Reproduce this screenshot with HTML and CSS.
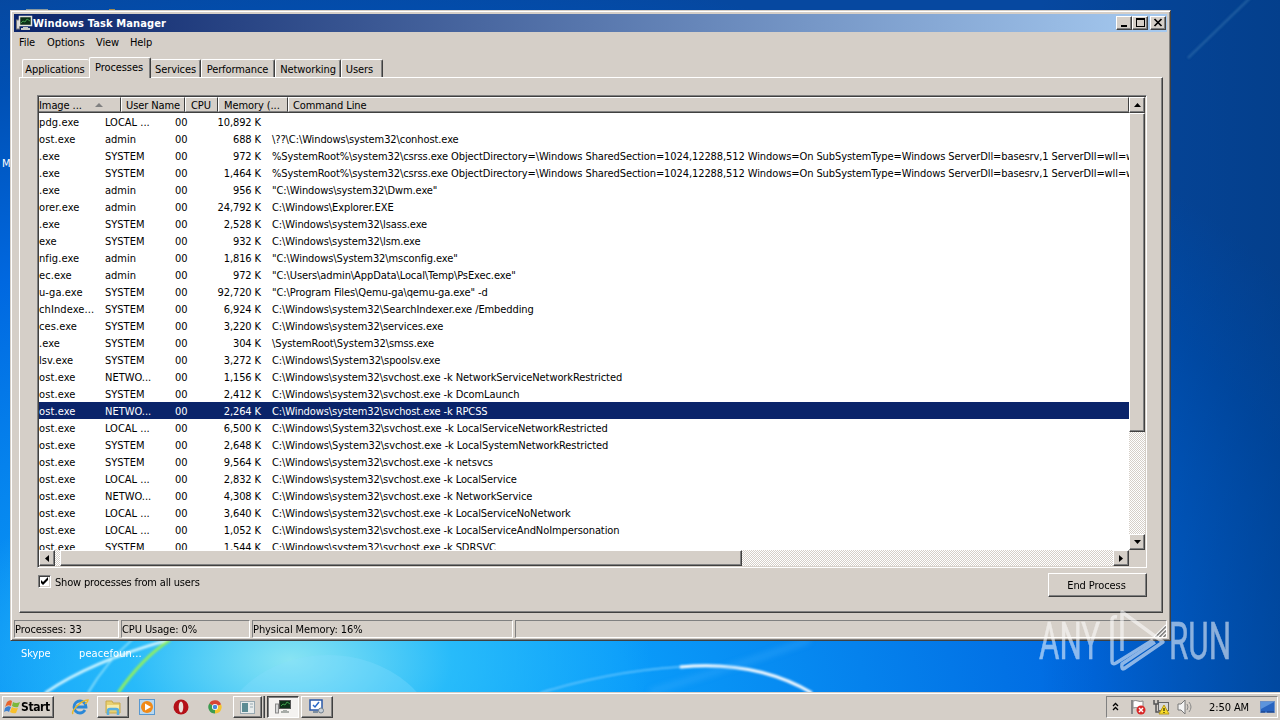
FILE: index.html
```html
<!DOCTYPE html>
<html lang="en">
<head>
  <meta charset="UTF-8">
  <meta name="viewport" content="width=device-width, initial-scale=1.0">
  <title>Windows Task Manager</title>
  <link rel="stylesheet" href="styles.css">
</head>
<body>

  <div class="desktop">
    <svg class="wallpaper" viewBox="0 0 1280 692" width="1280" height="692">
      <defs>
        <filter id="soft"><feGaussianBlur stdDeviation="0.8"/></filter>
        <filter id="softer"><feGaussianBlur stdDeviation="3"/></filter>
      </defs>
      <ellipse cx="328" cy="750" rx="112" ry="95" fill="#8df" opacity=".3"/>
      <g fill="none" filter="url(#soft)">
        <path d="M45 693 Q90 662 168 640" stroke="#d8f8ff" stroke-width="2.5"/>
        <path d="M88 693 Q106 662 134 638" stroke="#9ae6fb" stroke-width="1.5"/>
        <path d="M118 693 Q142 658 170 640" stroke="#90f060" stroke-width="3"/>
        <path d="M540 693 Q620 668 700 666" stroke="#6cc8ff" stroke-width="1.5"/>
        <path d="M680 667 Q756 660 812 693" stroke="#fff" stroke-width="3"/>
        <path d="M1188 58 L1250 -2" stroke="#3a78b0" stroke-width="2" opacity=".6"/>
      </g>
      <path d="M650 692 Q740 665 810 640" stroke="#4ab4ff" stroke-width="5" opacity=".4" fill="none" filter="url(#softer)"/>
      <rect x="26" y="9" width="22" height="1" fill="#8a9aa0"/>
      <rect x="109" y="9" width="6" height="2" fill="#a08a50"/>
    </svg>
    <span class="shortcut label-m">M</span>
    <span class="shortcut label-skype">Skype</span>
    <span class="shortcut label-peace">peacefoun...</span>

    <div class="window">
      <div class="titlebar">
        <svg width="17" height="16" viewBox="0 0 17 16">
          <rect x="0.5" y="5" width="3" height="9" fill="#d8d8d8" stroke="#777"/>
          <rect x="3.5" y="1.5" width="12" height="9" fill="#0c3018" stroke="#e4e4dc" stroke-width="1.5"/>
          <path d="M5 8l2-2 2 1 2-3 3 2" stroke="#3c9a4a" fill="none"/>
          <path d="M7 12h5v1h2v2H5v-2h2z" fill="#c8ccc8"/>
        </svg>
        <span class="title">Windows Task Manager</span>
        <div class="caption-btn"><svg width="14" height="11"><rect x="4" y="8" width="6" height="2"/></svg></div>
        <div class="caption-btn"><svg width="14" height="11"><path d="M3 1h9v9H3zM4 3v6h7V3z" fill-rule="evenodd"/></svg></div>
        <div class="caption-btn close"><svg width="14" height="11"><path d="M3.5 2l7 7M10.5 2l-7 7" stroke="#000" stroke-width="1.7"/></svg></div>
      </div>

      <div class="menu">
        <span class="m-file">File</span><span class="m-options">Options</span><span class="m-view">View</span><span>Help</span>
      </div>

      <div class="tabs">
        <div class="tab t-app">Applications</div>
        <div class="tab t-proc active">Processes</div>
        <div class="tab t-serv">Services</div>
        <div class="tab t-perf">Performance</div>
        <div class="tab t-net">Networking</div>
        <div class="tab t-users">Users</div>
      </div>

      <div class="page">
        <div class="list">
          <div class="view">
            <div class="header">
              <div class="h-image">Image ... <i></i></div>
              <div class="h-user">User Name</div>
              <div class="h-cpu">CPU</div>
              <div class="h-mem">Memory (...</div>
              <div class="h-cmd">Command Line</div>
            </div>
            <div class="rows" id="rows"></div>
          </div>
          <div class="vscroll">
            <div class="arrow"><svg width="7" height="4"><path d="M3.5 0L7 4H0z"/></svg></div>
            <div class="vthumb"></div>
            <div class="arrow down"><svg width="7" height="4"><path d="M0 0h7L3.5 4z"/></svg></div>
          </div>
          <div class="hscroll">
            <div class="arrow"><svg width="4" height="7"><path d="M0 3.5L4 0v7z"/></svg></div>
            <div class="hthumb"></div>
            <div class="arrow right"><svg width="4" height="7"><path d="M0 0l4 3.5L0 7z"/></svg></div>
          </div>
          <div class="corner"></div>
        </div>
        <div class="actions">
          <div class="check"><svg width="9" height="9"><path d="M1 3v3l2 2 5-5V0L3 5z"/></svg></div>
          <span class="check-label">Show processes from all users</span>
          <div class="end-btn">End Process</div>
        </div>
      </div>

      <div class="status">
        <div class="s-proc">Processes: 33</div>
        <div class="s-cpu">CPU Usage: 0%</div>
        <div class="s-mem">Physical Memory: 16%</div>
        <div class="s-rest">
          <svg width="13" height="13"><path d="M1 13L13 1M5 13l8-8M9 13l4-4" stroke="#fff" stroke-width="1.2"/><path d="M2.5 13L13 2.5M6.5 13L13 6.5M10.5 13l2.5-2.5" stroke="#808080" stroke-width="1.5"/></svg>
        </div>
      </div>
    </div>

    <svg class="watermark" width="196" height="66" viewBox="0 0 196 66">
      <g fill="#fff" stroke="#fff" stroke-width=".5" font-family="Roboto, sans-serif" font-size="52">
        <text x="2" y="50" textLength="61" lengthAdjust="spacingAndGlyphs">ANY</text>
        <text x="132" y="50" textLength="62" lengthAdjust="spacingAndGlyphs">RUN</text>
      </g>
      <g fill="none" stroke="#fff" stroke-width="3.5" stroke-linejoin="round">
        <path d="M85 42V3L126 33 88 59Q84 62 85 55L118 33"/>
        <path d="M80 8Q75 7 75 11V52Q75 56 79 54L116 31"/>
      </g>
    </svg>

    <div class="taskbar">
      <div class="start">
        <svg width="17" height="16" viewBox="0 0 17 16">
          <path d="M3 3Q6 0 8 2L7 7Q4 5 1 8z" fill="#e8642c"/>
          <path d="M9 3Q12 5 16 3L14 8Q11 9 8 7z" fill="#7cb83c"/>
          <path d="M1 9Q4 6 7 8L5 13Q3 11 0 13z" fill="#3c80d0"/>
          <path d="M8 8Q11 10 14 9L12 14Q9 15 6 13z" fill="#f8c02c"/>
        </svg>
        <b>Start</b>
      </div>
      <div class="slot s-ie">
        <svg width="18" height="18" viewBox="0 0 18 18">
          <path d="M14 12Q12 15 9 15A6 6 0 1 1 15 9H5" fill="none" stroke="#2a88d8" stroke-width="2.8"/>
          <path d="M2 16Q0 14 6 8T17 2Q17 4 14 6" fill="none" stroke="#e8b828" stroke-width="1.5"/>
        </svg>
      </div>
      <div class="slot raised s-folder">
        <svg width="18" height="17" viewBox="0 0 18 17">
          <path d="M2 2h6l1 2h7v10H2z" fill="#e8d070" stroke="#c8a848"/>
          <path d="M3 6h12v5H3z" fill="#f8eca8"/>
          <path d="M4 16v-4q0-2 2-2h6q2 0 2 2v4" fill="none" stroke="#58b0e0" stroke-width="2.5"/>
        </svg>
      </div>
      <div class="slot s-media">
        <svg width="17" height="17" viewBox="0 0 17 17">
          <rect x=".5" y=".5" width="15" height="15" fill="#b8d8f0" stroke="#5898d0"/>
          <circle cx="8" cy="8" r="6" fill="#f08a18"/><path d="M6 4.5l6 3.5-6 3.5z" fill="#fff"/>
        </svg>
      </div>
      <div class="slot s-opera">
        <svg width="16" height="16" viewBox="0 0 16 16"><circle cx="8" cy="8" r="7.5" fill="#b41018"/><ellipse cx="8" cy="8" rx="2.3" ry="5.5" fill="#e8e0dc"/></svg>
      </div>
      <div class="slot s-chrome">
        <svg width="14" height="14" viewBox="0 0 16 16">
          <path d="M8 8L1.5 4A7.5 7.5 0 0 1 15 5z" fill="#d84434"/>
          <path d="M8 8L15 5A7.5 7.5 0 0 1 8 15.5z" fill="#f4c430"/>
          <path d="M8 8v7.5A7.5 7.5 0 0 1 1.5 4z" fill="#3c9c50"/>
          <circle cx="8" cy="8" r="3.5" fill="#fff"/><circle cx="8" cy="8" r="2.6" fill="#4a88dc"/>
        </svg>
      </div>
      <div class="slot raised s-window">
        <svg width="15" height="13" viewBox="0 0 15 13"><rect x=".5" y=".5" width="14" height="12" fill="#e8ecec" stroke="#98a8b0"/><rect x="2" y="2" width="6" height="9" fill="#5c8c94"/><path d="M10 3h3M10 6h3" stroke="#98a8b0"/></svg>
      </div>
      <div class="slot-edge"></div>
      <div class="slot pressed s-taskmgr">
        <svg width="17" height="16" viewBox="0 0 17 16">
          <rect x="0.5" y="5" width="3" height="9" fill="#d8d8d8" stroke="#888"/>
          <rect x="4.5" y="1.5" width="11" height="8" fill="#0c3018" stroke="#555"/>
          <path d="M6 7l2-2 2 1 2-3 3 2" stroke="#3c9a4a" fill="none"/>
          <path d="M8 11h4v1h2v2H6v-2h2z" fill="#a8aca8"/>
        </svg>
      </div>
      <div class="slot raised s-config">
        <svg width="16" height="16" viewBox="0 0 16 16">
          <rect x="1" y="1" width="12" height="10" fill="#fff" stroke="#2858a8" stroke-width="1.5"/>
          <path d="M4 6l2 2 4-5" stroke="#2868c8" fill="none" stroke-width="1.5"/>
          <path d="M4 13h5" stroke="#607890" stroke-width="1.5"/><circle cx="12" cy="11.5" r="2.5" fill="#c8d0d8" stroke="#708090"/>
        </svg>
      </div>

      <div class="tray">
        <svg class="chev" width="7" height="10" viewBox="0 0 7 10"><path d="M1 4L3.5 1.500l2.500 2.500M1 8l2.500-2.500L6 8" fill="none" stroke="#000" stroke-width="1.3"/></svg>
        <svg class="flag" width="17" height="16" viewBox="0 0 17 16">
          <path d="M2 1v14" stroke="#888" stroke-width="2"/><path d="M3 2q3-1 5 0t5 0v7q-3 1-5 0t-5 0z" fill="#fff" stroke="#888"/>
          <circle cx="11" cy="11" r="4.5" fill="#d82828"/><path d="M9 9l4 4M13 9l-4 4" stroke="#fff" stroke-width="1.5"/>
        </svg>
        <svg class="net" width="17" height="16" viewBox="0 0 17 16">
          <rect x="5.5" y="3.5" width="10" height="8" fill="#d8d8d8" stroke="#666"/>
          <path d="M1 1v4h4V1M3 5v8h5" fill="none" stroke="#555" stroke-width="1.5"/>
          <path d="M11 6l5 9H6z" fill="#f8dc28" stroke="#b89818"/><path d="M11 9v3M11 13v1" stroke="#000"/>
        </svg>
        <svg class="vol" width="17" height="16" viewBox="0 0 17 16">
          <path d="M1 5h3l4-4v14l-4-4H1z" fill="#f4f4f4" stroke="#777"/>
          <path d="M10 5q2 3 0 6M12 3q4 5 0 10" fill="none" stroke="#888"/>
        </svg>
        <span class="clock">2:50 AM</span>
        <svg class="desk" width="15" height="13" viewBox="0 0 15 13"><rect x=".5" y=".5" width="14" height="11" fill="#2864c0" stroke="#6a90c8"/><path d="M1 1h13L1 8z" fill="#5c94dc"/><path d="M1 11h4M7 11h7" stroke="#183878"/></svg>
      </div>
    </div>
  </div>

  <script>
    const sys = 'C:\\Windows\\system32\\';
    const csrss = '%SystemRoot%\\system32\\csrss.exe ObjectDirectory=\\Windows SharedSection=1024,12288,512 Windows=On SubSystemType=Windows ServerDll=basesrv,1 ServerDll=wll=w';
    // image, user, memory, command line
    const processes = [
      ['pdg.exe', 'LOCAL ...', '10,892', ''],
      ['ost.exe', 'admin', '688', '\\??\\' + sys + 'conhost.exe'],
      ['.exe', 'SYSTEM', '972', csrss],
      ['.exe', 'SYSTEM', '1,464', csrss],
      ['.exe', 'admin', '956', '"C:\\Windows\\system32\\Dwm.exe"'],
      ['orer.exe', 'admin', '24,792', 'C:\\Windows\\Explorer.EXE'],
      ['.exe', 'SYSTEM', '2,528', sys + 'lsass.exe'],
      ['exe', 'SYSTEM', '932', sys + 'lsm.exe'],
      ['nfig.exe', 'admin', '1,816', '"C:\\Windows\\System32\\msconfig.exe"'],
      ['ec.exe', 'admin', '972', '"C:\\Users\\admin\\AppData\\Local\\Temp\\PsExec.exe"'],
      ['u-ga.exe', 'SYSTEM', '92,720', '"C:\\Program Files\\Qemu-ga\\qemu-ga.exe" -d'],
      ['chIndexe...', 'SYSTEM', '6,924', sys + 'SearchIndexer.exe /Embedding'],
      ['ces.exe', 'SYSTEM', '3,220', sys + 'services.exe'],
      ['.exe', 'SYSTEM', '304', '\\SystemRoot\\System32\\smss.exe'],
      ['lsv.exe', 'SYSTEM', '3,272', 'C:\\Windows\\System32\\spoolsv.exe'],
      ['ost.exe', 'NETWO...', '1,156', sys + 'svchost.exe -k NetworkServiceNetworkRestricted'],
      ['ost.exe', 'SYSTEM', '2,412', sys + 'svchost.exe -k DcomLaunch'],
      ['ost.exe', 'NETWO...', '2,264', sys + 'svchost.exe -k RPCSS'],
      ['ost.exe', 'LOCAL ...', '6,500', 'C:\\Windows\\System32\\svchost.exe -k LocalServiceNetworkRestricted'],
      ['ost.exe', 'SYSTEM', '2,648', 'C:\\Windows\\System32\\svchost.exe -k LocalSystemNetworkRestricted'],
      ['ost.exe', 'SYSTEM', '9,564', sys + 'svchost.exe -k netsvcs'],
      ['ost.exe', 'LOCAL ...', '2,832', sys + 'svchost.exe -k LocalService'],
      ['ost.exe', 'NETWO...', '4,308', sys + 'svchost.exe -k NetworkService'],
      ['ost.exe', 'LOCAL ...', '3,640', sys + 'svchost.exe -k LocalServiceNoNetwork'],
      ['ost.exe', 'LOCAL ...', '1,052', sys + 'svchost.exe -k LocalServiceAndNoImpersonation'],
      ['ost.exe', 'SYSTEM', '1,544', sys + 'svchost.exe -k SDRSVC']
    ];
    const rows = document.getElementById('rows');

    processes.forEach((p, i) => {
      const row = document.createElement('div');
      row.className = i === 17 ? 'row selected' : 'row';
      [p[0], p[1], '00', p[2] + ' K', p[3]].forEach(text => {
        const cell = document.createElement('span');
        cell.textContent = text;
        row.appendChild(cell);
      });
      rows.appendChild(row);
    });
  </script>
</body>
</html>
```

FILE: styles.css
```css
* {
  margin: 0;
  padding: 0;
  box-sizing: border-box;
}

body {
  font-family: "DejaVu Sans Condensed", "DejaVu Sans", sans-serif;
  font-size: 11px;
  letter-spacing: -0.09px;
  color: #000;
  overflow: hidden;
}

svg {
  display: block;
  flex: none;
}

.desktop {
  position: relative;
  display: flex;
  flex-direction: column;
  justify-content: flex-end;
  width: 1280px;
  height: 720px;
  overflow: hidden;
  background:
    radial-gradient(ellipse 360px 200px at 290px 660px, rgba(150, 235, 242, .9), rgba(60, 205, 250, .6) 45%, rgba(20, 150, 250, 0) 100%),
    linear-gradient(90deg, rgba(0, 70, 150, 0) 1040px, rgba(0, 50, 110, .4) 1280px),
    radial-gradient(ellipse 1150px 760px at 350px 720px, #08a4fa 0, #0a9cfa 25%, #0068e0 65%, #0050b4 88%, #0648a0 100%);
}

.wallpaper {
  position: absolute;
  top: 0;
  left: 0;
}

.shortcut {
  position: absolute;
  color: #fff;
  line-height: 14px;
}

.label-m {
  left: 2px;
  top: 157px;
}

.label-skype {
  left: 21px;
  top: 647px;
}

.label-peace {
  left: 79px;
  top: 647px;
  letter-spacing: 0.1px;
}

/* window */
.window {
  position: absolute;
  left: 10px;
  top: 10px;
  width: 1161px;
  height: 631px;
  padding: 2px;
  background: #d5cfc8;
  border: 1px solid;
  border-color: #d5cfc8 #404040 #404040 #d5cfc8;
  box-shadow: inset 1px 1px #fff, inset -1px -1px #808080;
}

.titlebar {
  display: flex;
  align-items: center;
  height: 18px;
  margin: 1px 1px 0;
  padding: 0 1px 0 2px;
  background: linear-gradient(90deg, #0a246a, #a6caf0);
}

.title {
  flex: 1;
  color: #fff;
  font-weight: bold;
  letter-spacing: 0.12px;
}

.caption-btn {
  width: 16px;
  height: 14px;
  padding: 1px;
  background: #d5cfc8;
  border: 1px solid;
  border-color: #fff #404040 #404040 #fff;
  box-shadow: inset -1px -1px #808080;
}

.caption-btn svg {
  margin: -1px;
}

.close {
  margin-left: 2px;
}

.menu {
  display: flex;
  height: 20px;
  padding-left: 6px;
  line-height: 21px;
}

.m-file {
  width: 28px;
}

.m-options {
  width: 49px;
}

.m-view {
  width: 34px;
}

.tabs {
  display: flex;
  align-items: flex-end;
  height: 25px;
  padding-left: 9px;
}

.tab {
  height: 18px;
  padding-top: 2px;
  line-height: 15px;
  text-align: center;
  border: 1px solid #fff;
  border-right-color: #404040;
  border-bottom: none;
  border-radius: 2px 2px 0 0;
  box-shadow: inset -1px 0 #808080;
  white-space: nowrap;
}

.t-app {
  width: 67px;
  padding-right: 2px;
  border-right: none;
  box-shadow: none;
}

.t-proc {
  width: 62px;
}

.t-serv {
  width: 50px;
  border-left: none;
}

.t-perf {
  width: 74px;
  padding-right: 1px;
}

.t-net {
  width: 66px;
}

.t-users {
  width: 42px;
  padding-right: 5px;
}

.tab.active {
  height: 21px;
  padding-top: 2px;
  margin-bottom: -1px;
  padding-right: 2px;
  background: #d5cfc8;
  z-index: 1;
}

.page {
  width: 1144px;
  height: 536px;
  margin-left: 6px;
  padding: 17px 15px 0 17px;
  border: 1px solid;
  border-color: #fff #404040 #404040 #fff;
  box-shadow: inset -1px -1px #808080;
}

/* process list */
.list {
  display: grid;
  grid-template-columns: 1090px 16px;
  grid-template-rows: 453px 16px;
  width: 1110px;
  height: 473px;
  border: 1px solid;
  border-color: #808080 #fff #fff #808080;
  padding: 1px;
  box-shadow: inset 1px 1px #404040, inset -1px -1px #d5cfc8;
  background: #d5cfc8;
}

.view {
  overflow: hidden;
  background: #fff;
}

.header {
  display: flex;
  height: 16px;
  background: #d5cfc8;
  border-bottom: 1px solid #404040;
  line-height: 15px;
}

.header div {
  display: flex;
  align-items: center;
  border: 1px solid;
  border-color: #fff #404040 #808080 #fff;
  padding: 1px 0 0 4px;
  white-space: nowrap;
}

.header .h-image {
  width: 82px;
  padding-left: 0;
  border-left: none;
}

.h-image i {
  margin-left: 13px;
  border: 4px solid transparent;
  border-top: none;
  border-bottom-color: #808080;
}

.h-user {
  width: 64px;
}

.header .h-cpu {
  width: 33px;
  padding-left: 5px;
}

.header .h-mem {
  width: 70px;
  padding-left: 5px;
}

.h-cmd {
  flex: 1;
}

.row {
  display: grid;
  grid-template-columns: 66px 70px 20px 66px 1fr;
  height: 17px;
  line-height: 19px;
  white-space: pre;
}

.row span:first-child {
  letter-spacing: 0.1px;
}

.row span:nth-child(2) {
  letter-spacing: 0;
}

.row span:nth-child(4) {
  text-align: right;
}

.row span:last-child {
  padding-left: 11px;
}

.selected {
  background: #0a246a;
  color: #fff;
}

.vscroll,
.hscroll {
  display: flex;
  background: repeating-conic-gradient(#fff 0 25%, #d5cfc8 0 50%) 0 0 / 2px 2px;
}

.vscroll {
  flex-direction: column;
}

.arrow,
.vthumb,
.hthumb,
.start,
.raised,
.end-btn {
  background: #d5cfc8;
  border: 1px solid;
  border-color: #fff #404040 #404040 #fff;
  box-shadow: inset -1px -1px #808080;
}

.arrow {
  display: flex;
  align-items: center;
  justify-content: center;
  width: 16px;
  height: 16px;
}

.vthumb {
  height: 319px;
}

.hthumb {
  width: 682px;
  margin-left: 5px;
}

.down {
  margin-top: auto;
}

.right {
  margin-left: auto;
}

.corner {
  background: #d5cfc8;
}

.actions {
  display: flex;
  padding: 5px 0 0 1px;
}

.check {
  width: 13px;
  height: 13px;
  margin-top: 2px;
  padding: 1px;
  background: #fff;
  border: 1px solid;
  border-color: #808080 #fff #fff #808080;
  box-shadow: inset 1px 1px #404040, inset -1px -1px #d5cfc8;
}

.check-label {
  margin-left: 4px;
  line-height: 19px;
  letter-spacing: -0.18px;
}

.end-btn {
  width: 99px;
  height: 24px;
  margin-left: auto;
  padding-right: 2px;
  line-height: 24px;
  text-align: center;
}

.status {
  display: flex;
  gap: 2px;
  height: 18px;
  margin: 7px 1px 0;
  line-height: 17px;
}

.status div {
  border: 1px solid;
  border-color: #808080 #fff #fff #808080;
}

.s-proc {
  width: 105px;
}

.s-cpu {
  width: 129px;
}

.s-mem {
  width: 261px;
}

.s-rest {
  display: flex;
  flex: 1;
  align-items: flex-end;
  justify-content: flex-end;
}

.watermark {
  position: absolute;
  left: 1037px;
  top: 609px;
  opacity: .55;
}

/* taskbar */
.taskbar {
  position: relative;
  display: flex;
  align-items: center;
  height: 28px;
  padding: 2px 2px 0;
  background: #d5cfc8;
  box-shadow: inset 0 1px #d5cfc8, inset 0 2px #fff;
}

.start {
  display: flex;
  align-items: center;
  width: 52px;
  height: 22px;
  padding-left: 1px;
  margin-right: 9px;
}

.start b {
  font-size: 12px;
  letter-spacing: -0.4px;
}

.slot {
  display: flex;
  align-items: center;
  justify-content: center;
  width: 34px;
  height: 22px;
}

.s-folder {
  width: 32px;
}

.s-media {
  padding-left: 2px;
}

.s-window {
  width: 29px;
  margin-left: 1px;
}

.s-opera {
  margin-left: 1px;
}

.slot-edge {
  width: 3px;
  height: 22px;
  margin-right: 2px;
  border-right: 1px solid #404040;
  box-shadow: inset -1px 0 #808080;
}

.pressed {
  width: 32px;
  background: #f4f2f0;
  border: 1px solid;
  border-color: #404040 #fff #fff #404040;
  box-shadow: inset 1px 1px #808080;
}

.s-config {
  width: 32px;
  margin-left: 2px;
}

.tray {
  display: flex;
  align-items: center;
  width: 172px;
  height: 22px;
  margin-left: auto;
  padding-left: 5px;
  border: 1px solid;
  border-color: #808080 #fff #fff #808080;
}

.flag {
  margin-left: 11px;
}

.net {
  margin-left: 6px;
}

.vol {
  margin-left: 7px;
}

.clock {
  margin-left: 15px;
  white-space: nowrap;
}

.desk {
  margin-left: 11px;
}
```
